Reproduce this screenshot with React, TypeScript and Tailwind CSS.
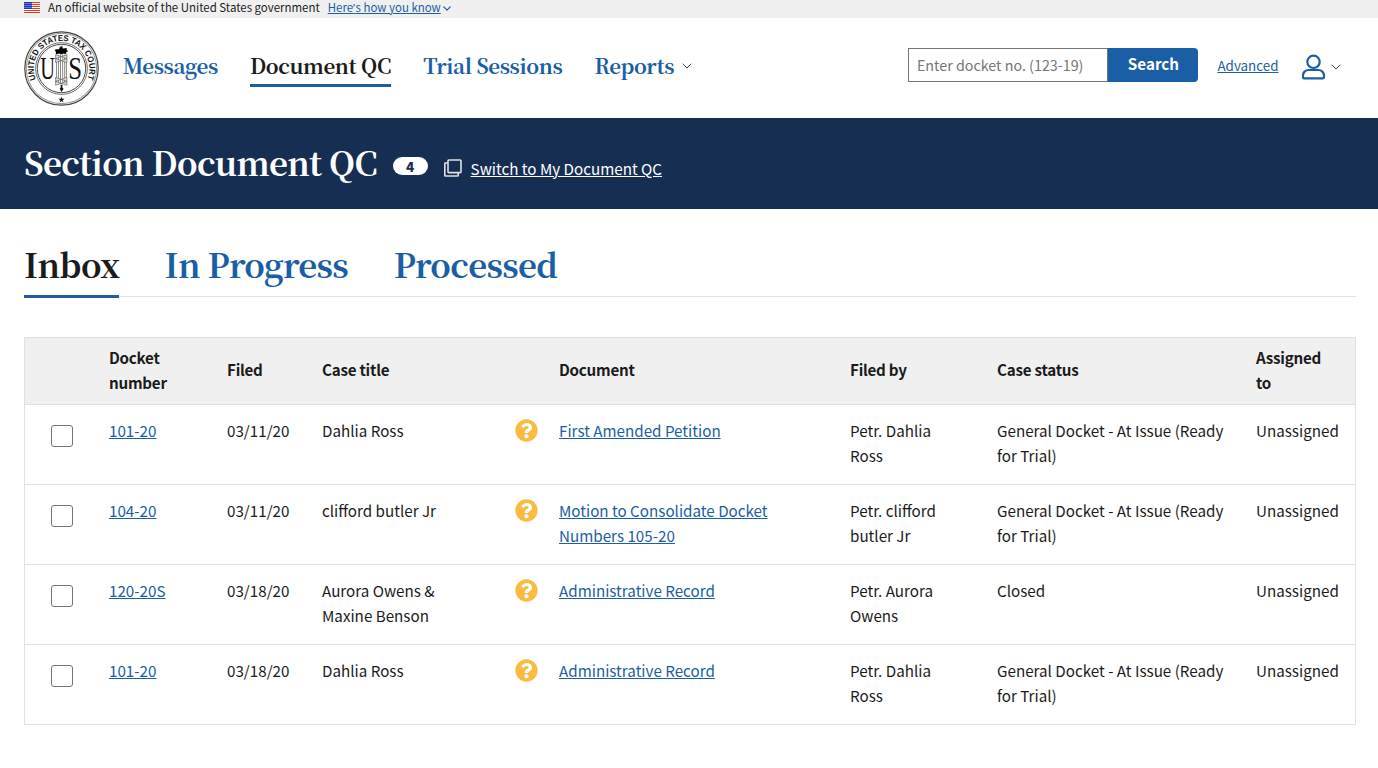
import React from "react";

const sans = "font-['Noto_Sans_CJK_SC','Noto_Sans',sans-serif]";
const serif = "font-['Noto_Serif_CJK_SC','Liberation_Serif',serif]";

const rows = [
  { docket: "101-20", filed: "03/11/20", title: "Dahlia Ross", doc: "First Amended Petition", by: "Petr. Dahlia Ross", status: "General Docket - At Issue (Ready for Trial)" },
  { docket: "104-20", filed: "03/11/20", title: "clifford butler Jr", doc: "Motion to Consolidate Docket Numbers 105-20", by: "Petr. clifford butler Jr", status: "General Docket - At Issue (Ready for Trial)" },
  { docket: "120-20S", filed: "03/18/20", title: "Aurora Owens & Maxine Benson", doc: "Administrative Record", by: "Petr. Aurora Owens", status: "Closed" },
  { docket: "101-20", filed: "03/18/20", title: "Dahlia Ross", doc: "Administrative Record", by: "Petr. Dahlia Ross", status: "General Docket - At Issue (Ready for Trial)" },
];

function Chevron({ className }: { className: string }) {
  return (
    <svg viewBox="0 0 10 6" className={className} fill="none" stroke="currentColor" strokeLinecap="round" strokeLinejoin="round">
      <path d="M1 1l4 4 4-4" />
    </svg>
  );
}

function Flag() {
  return (
    <svg width="16" height="11" viewBox="0 0 16 11" className="shrink-0">
      <rect width="16" height="11" fill="#fff" />
      {[0, 2, 4, 6, 8, 10].map((y) => (
        <rect key={y} y={y} width="16" height="1" fill="#db3e1f" />
      ))}
      <rect width="8" height="7" fill="#1e33b1" />
      {[1, 3, 5].map((y) =>
        [1, 3, 5, 7].map((x) => <rect key={`${x}-${y}`} x={x - 0.4} y={y} width="0.8" height="0.8" fill="#fff" />)
      )}
    </svg>
  );
}

function Seal() {
  return (
    <svg width="75" height="75" viewBox="0 0 76 76" className="mt-px shrink-0">
      <defs>
        <path id="ring" d="M12.1 48.9A28.1 28.1 0 1 1 61.6 53.3" />
      </defs>
      <g fill="none" stroke="#444">
        <circle cx="38" cy="38" r="37.2" strokeWidth="1.2" />
        <circle cx="38" cy="38" r="35.6" strokeWidth="0.6" />
        <circle cx="38" cy="38" r="26.2" strokeWidth="0.8" />
        <circle cx="38" cy="38" r="24.5" strokeWidth="1" />
      </g>
      <text fontFamily="Liberation Sans" fontWeight="700" fontSize="8.6" fill="#111">
        <textPath href="#ring" textLength="110" lengthAdjust="spacingAndGlyphs">UNITED STATES TAX COURT</textPath>
      </text>
      <g fontFamily="Liberation Serif" fontSize="31" fill="#111">
        <text x="16.5" y="48.5" textLength="15" lengthAdjust="spacingAndGlyphs">U</text>
        <text x="44.8" y="48.5" textLength="14" lengthAdjust="spacingAndGlyphs">S</text>
      </g>
      <rect x="31.5" y="23" width="12.6" height="31" fill="#fff" />
      <g stroke="#555" strokeWidth="0.7" fill="none">
        <path d="M33 24v30M35 24v30M37 24v30M39.2 24v30M41.2 24v30M43 24v30" />
      </g>
      <g fill="#ddd" stroke="#555" strokeWidth="0.6">
        <path d="M32 24l11.5 4v4L32 28zM43.5 24L32 28v4l11.5-4zM32 47l11.5 4v4L32 51zM43.5 47L32 51v4l11.5-4z" />
      </g>
      <path d="M32 18.5h3.5l1.2-3.5.6 2 1.2-2.5.8 3.2 4-.5v2l1.5 1.3-2 .7v2l-3-.5-2 1-2-1-3.5.8v-2.5l-1-1z" fill="#000" />
      <path d="M37.2 54.5h1.7v3l1.2 1-2 3.2-2-3.2 1.1-1z" fill="#111" />
      <path d="M38 66.500l.8 2.200h2.300l-1.900 1.400.7 2.300-1.900-1.400-1.900 1.400.7-2.300-1.900-1.400h2.300z" fill="#111" />
    </svg>
  );
}

function QuestionIcon() {
  return (
    <svg width="23" height="23" viewBox="0 0 512 512" className="mt-[1.3px] block">
      <path
        fill="#fbbb41"
        d="M504 256c0 136.997-111.043 248-248 248S8 392.997 8 256C8 119.083 119.043 8 256 8s248 111.083 248 248zM262.655 90c-54.497 0-89.255 22.957-116.549 63.758-3.536 5.286-2.353 12.415 2.715 16.258l34.699 26.31c5.205 3.947 12.621 3.008 16.665-2.122 17.864-22.658 30.113-35.797 57.303-35.797 20.429 0 45.698 13.148 45.698 32.958 0 14.976-12.363 22.667-32.534 33.976C247.128 238.528 216 254.941 216 296v4c0 6.627 5.373 12 12 12h56c6.627 0 12-5.373 12-12v-1.333c0-28.462 83.186-29.647 83.186-106.667 0-58.002-60.165-102-116.531-102zM256 338c-25.365 0-46 20.635-46 46 0 25.364 20.635 46 46 46s46-20.636 46-46c0-25.365-20.635-46-46-46z"
      />
    </svg>
  );
}

export default function App() {
  return (
    <div className={`${sans} h-[768px] w-[1378px] overflow-hidden bg-white text-[15.2px] leading-[25px] text-[#1b1b1b]`}>
      <div className="flex h-[18px] items-center bg-[#f0f0f0] pb-[3px] pl-6 text-[11.46px] leading-[15px]">
        <Flag />
        <span className="ml-2 whitespace-nowrap">An official website of the United States government</span>
        <a className="ml-2 flex items-center whitespace-nowrap text-[#1a5ea5]" href="#">
          <span className="underline underline-offset-1">
            Here<span className="font-['Open_Sans'] tracking-[0.5px]">’</span>s how you know
          </span>
          <Chevron className="ml-[2px] mt-[2px] h-[5px] w-2 stroke-[1.6]" />
        </a>
      </div>

      <header className="flex h-[100px] items-center pl-6">
        <Seal />
        <nav className={`${serif} ml-[23.7px] flex gap-8 text-[20.6px] font-bold leading-[30px] tracking-[-0.38px] text-[#1a5ea5]`}>
          <a href="#" className="border-b-[3px] border-transparent pb-[4px] pt-px">Messages</a>
          <a href="#" className="border-b-[3px] border-[#1a5ea5] pb-[4px] pt-px text-[#1b1b1b]">Document QC</a>
          <a href="#" className="border-b-[3px] border-transparent pb-[4px] pt-px">Trial Sessions</a>
          <a href="#" className="flex items-center border-b-[3px] border-transparent pb-[4px] pt-px">
            Reports
            <Chevron className="ml-[7.5px] mt-[2px] h-[6px] w-[10px] text-[#444]" />
          </a>
        </nav>
        <div className="ml-auto mr-[37px] flex items-center">
          <div className="-mt-[6px] flex h-[34px]">
            <input className="w-[200px] border border-[#71767a] pb-px pl-[7.500px] text-[14.3px] outline-none placeholder:text-[#757575]" placeholder="Enter docket no. (123-19)" />
            <button className="w-[90px] rounded-r-[4px] bg-[#1a5ea5] pb-1 font-bold text-white">Search</button>
          </div>
          <a href="#" className="-mt-[6px] ml-[19px] text-[13.4px] text-[#1a5ea5] underline underline-offset-1">Advanced</a>
          <svg width="24" height="26" viewBox="0 0 24 26" className="-mt-[3px] ml-[23px]" fill="none" stroke="#1a5ea5" strokeWidth="2.2">
            <circle cx="11.5" cy="7.8" r="6.2" />
            <path d="M6.5 16h10a5.5 5.5 0 0 1 5.5 5.5V23a1.4 1.4 0 0 1-1.4 1.4H2.4A1.4 1.4 0 0 1 1 23v-1.5A5.5 5.5 0 0 1 6.5 16z" />
          </svg>
          <Chevron className="-mt-[2px] ml-[5.5px] h-[6px] w-[10px] text-[#444]" />
        </div>
      </header>

      <div className="flex h-[91px] items-center bg-[#162e51] pl-6 text-white">
        <h1 className={`${serif} mb-1 whitespace-nowrap text-[33px] font-bold leading-[44px] tracking-[-0.68px]`}>Section Document QC</h1>
        <span className="ml-[15.5px] mt-[5px] flex h-[18px] w-[35px] items-center justify-center rounded-full bg-white text-[13.5px] font-black leading-[18px] text-[#162e51]">4</span>
        <svg width="18" height="18" viewBox="0 0 18 18" className="ml-4 mt-[9px]" fill="none" stroke="#dfe1e2" strokeWidth="1.6">
          <rect x="4" y="1" width="13" height="12.6" rx=".8" />
          <path d="M4 4H1.4a.6.6 0 0 0-.6.6v11.8a.6.6 0 0 0 .6.6h12.2a.6.6 0 0 0 .6-.6V14" />
        </svg>
        <a href="#" className="ml-[9px] mt-[9px] underline underline-offset-1">Switch to My Document QC</a>
      </div>

      <div className={`${serif} ml-6 mr-[22px] mt-8 flex h-14 gap-[45.5px] border-b border-[#dfe1e2] text-[33px] font-bold leading-[46px] tracking-[-0.66px] text-[#1a5ea5]`}>
        <a href="#" className="h-[57px] w-[95px] border-b-[3px] border-[#1a5ea5] text-[#1b1b1b]">Inbox</a>
        <a href="#">In Progress</a>
        <a href="#">Processed</a>
      </div>

      <table className="ml-6 mt-10 w-[1331px] table-fixed border-collapse border border-[#dfe1e2] text-left">
        <colgroup>
          <col className="w-[84.5px]" />
          <col className="w-[118px]" />
          <col className="w-[95px]" />
          <col className="w-[193px]" />
          <col className="w-[44px]" />
          <col className="w-[291px]" />
          <col className="w-[147px]" />
          <col className="w-[259px]" />
          <col className="w-[99.5px]" />
        </colgroup>
        <thead>
          <tr className="h-[67px] bg-[#f0f0f0] align-middle font-bold tracking-[-0.25px]">
            <th />
            <th className="pb-[2px] pr-[30px]">Docket number</th>
            <th className="pb-[3px]">Filed</th>
            <th className="pb-[3px]">Case title</th>
            <th />
            <th className="pb-[3px]">Document</th>
            <th className="pb-[3px]">Filed by</th>
            <th className="pb-[3px]">Case status</th>
            <th className="pb-[2px] pr-4">Assigned to</th>
          </tr>
        </thead>
        <tbody>
          {rows.map((r, i) => (
            <tr key={i} className="h-20 border-t border-[#dfe1e2] align-top">
              <td className="pl-[26px] pt-5">
                <span className="block size-[22px] rounded-[3px] border border-[#71767a] bg-white" />
              </td>
              <td className="pt-[13px]"><a href="#" className="text-[#1a5ea5] underline underline-offset-1">{r.docket}</a></td>
              <td className="pt-[13px]">{r.filed}</td>
              <td className="pr-[30px] pt-[13px]">{r.title}</td>
              <td className="pt-[13px]"><QuestionIcon /></td>
              <td className="pr-[30px] pt-[13px]"><a href="#" className="text-[#1a5ea5] underline underline-offset-1">{r.doc}</a></td>
              <td className="pr-[30px] pt-[13px]">{r.by}</td>
              <td className="pr-[30px] pt-[13px]">{r.status}</td>
              <td className="pt-[13px]">Unassigned</td>
            </tr>
          ))}
        </tbody>
      </table>
    </div>
  );
}
